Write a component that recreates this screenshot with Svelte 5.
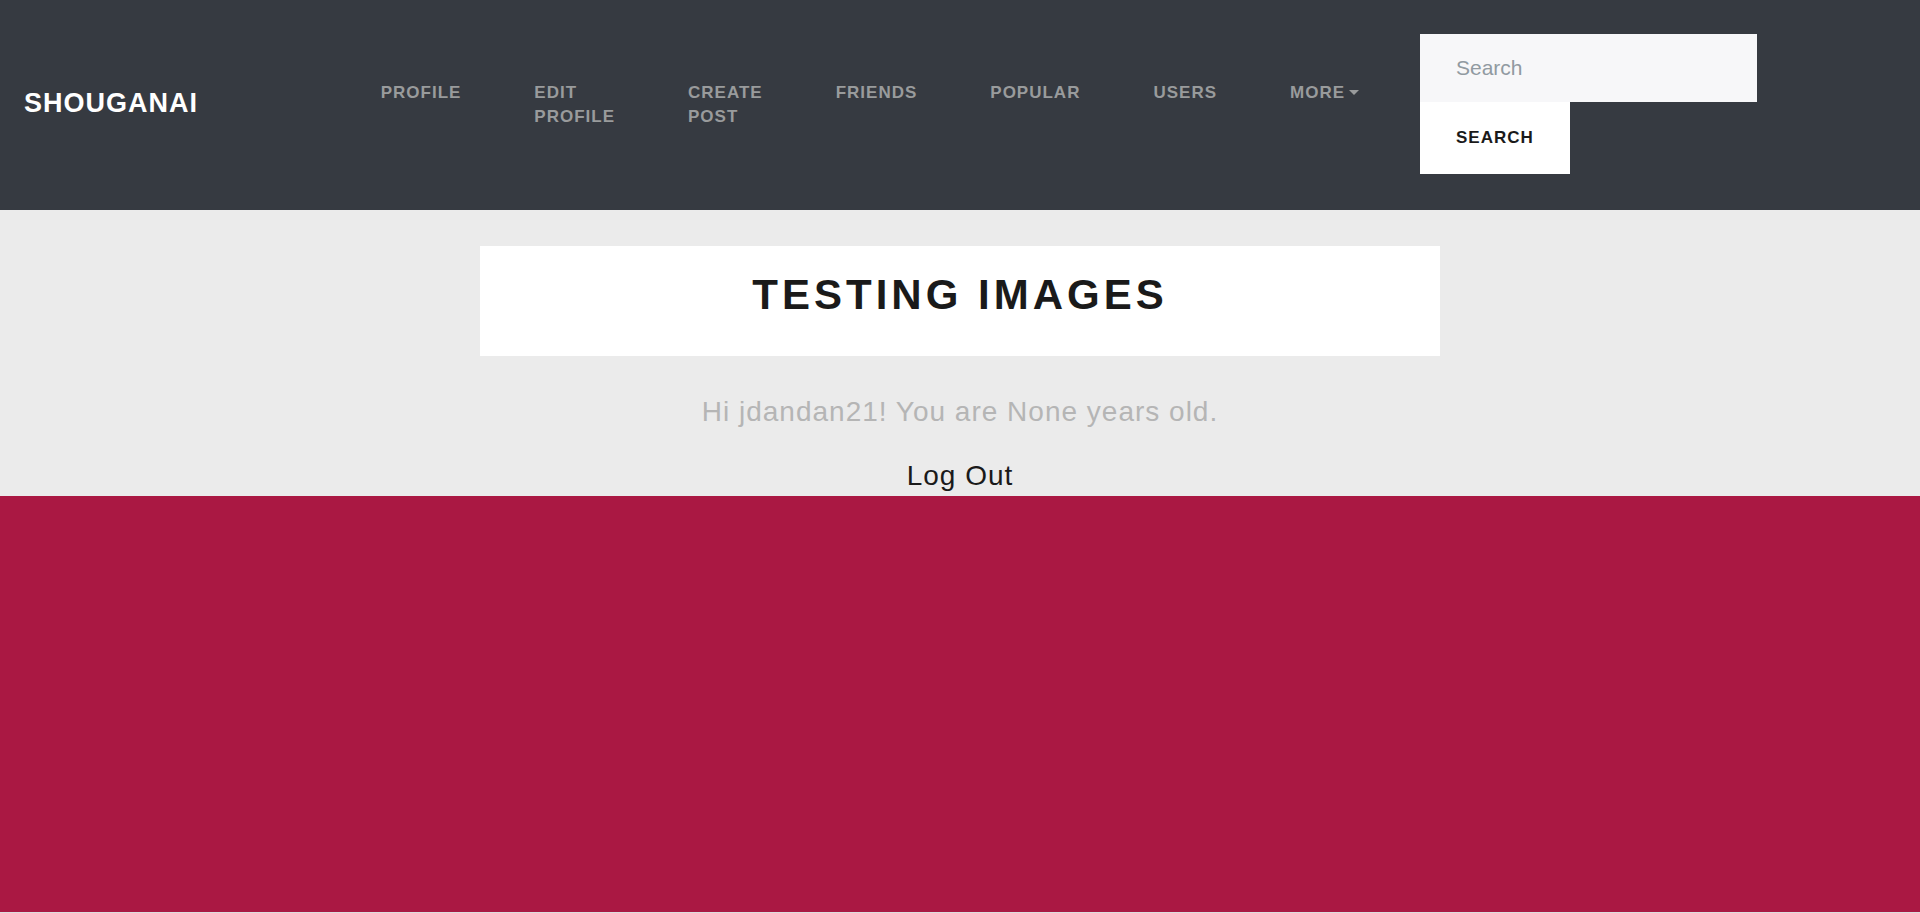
<script>
  const links = ['Profile', 'Edit Profile', 'Create Post', 'Friends', 'Popular', 'Users'];
  let query = $state('');
</script>

<div class="page">
  <header class="navbar">
    <a class="brand" href="#home">Shouganai</a>
    <nav>
      <ul>
        {#each links as link}
          <li><a href="#{link}">{link}</a></li>
        {/each}
        <li><button class="more" type="button">More<span class="caret"></span></button></li>
      </ul>
    </nav>
    <form onsubmit={(e) => e.preventDefault()}>
      <input type="search" placeholder="Search" aria-label="Search" bind:value={query} />
      <button class="submit" type="submit">Search</button>
    </form>
  </header>

  <main>
    <div class="banner"><h1>Testing Images</h1></div>
    <p>Hi jdandan21! You are None years old.</p>
    <a class="logout" href="#logout">Log Out</a>
  </main>

  <section class="backdrop"></section>
  <footer></footer>
</div>

<style>
  :global(body) {
    margin: 0;
    font-family: "Liberation Sans", Arial, sans-serif;
    color: #1a1a1a;
  }
  .page {
    display: flex;
    flex-direction: column;
    min-height: 100vh;
  }
  a {
    color: inherit;
    text-decoration: none;
  }
  .navbar {
    display: flex;
    align-items: center;
    padding: 34px 24px 36px;
    background: #363a41;
  }
  .brand {
    flex: 1;
    padding-bottom: 2px;
    color: #fff;
    font-size: 27px;
    font-weight: 700;
    letter-spacing: 1px;
    text-transform: uppercase;
  }
  ul {
    display: flex;
    gap: 73px;
    margin: 0 61px 0 0;
    padding: 2px 0 0;
    list-style: none;
  }
  li {
    width: min-content;
    color: #999b9c;
    font-size: 17px;
    font-weight: 700;
    line-height: 24px;
    letter-spacing: 1px;
    text-transform: uppercase;
  }
  .more {
    display: flex;
    align-items: center;
    gap: 4px;
    padding: 0;
    border: 0;
    background: none;
    color: inherit;
    font: inherit;
    letter-spacing: inherit;
    text-transform: inherit;
  }
  .caret {
    margin-bottom: 2px;
    border: 5px solid transparent;
    border-top-color: currentColor;
    border-bottom: 0;
  }
  form {
    display: flex;
    flex-direction: column;
    align-items: flex-start;
    margin-right: 139px;
  }
  input {
    box-sizing: border-box;
    width: 337px;
    height: 68px;
    padding: 0 36px;
    border: 0;
    border-radius: 0;
    background: #f7f7f9;
    font: 21px "Liberation Sans", Arial, sans-serif;
    appearance: none;
  }
  input::placeholder {
    color: #919aa1;
    opacity: 1;
  }
  .submit {
    height: 72px;
    padding: 0 36px;
    border: 0;
    background: #fff;
    color: #1a1a1a;
    font: 700 17px "Liberation Sans", Arial, sans-serif;
    letter-spacing: 1px;
    text-transform: uppercase;
  }
  main {
    display: flex;
    flex-direction: column;
    align-items: center;
    padding-top: 36px;
    background: #ebebeb;
  }
  .banner {
    width: 50%;
    padding: 24px 0 36px;
    background: #fff;
    text-align: center;
  }
  h1 {
    margin: 0;
    font-size: 42px;
    line-height: 50px;
    letter-spacing: 4px;
    text-transform: uppercase;
  }
  p,
  .logout {
    font-size: 28px;
    line-height: 40px;
    letter-spacing: 1px;
  }
  p {
    margin: 36px 0 24px;
    color: #b5b5b5;
  }
  .backdrop {
    flex: 1;
    background: #aa1843;
  }
  footer {
    height: 1px;
    background: #ddd;
  }
</style>
